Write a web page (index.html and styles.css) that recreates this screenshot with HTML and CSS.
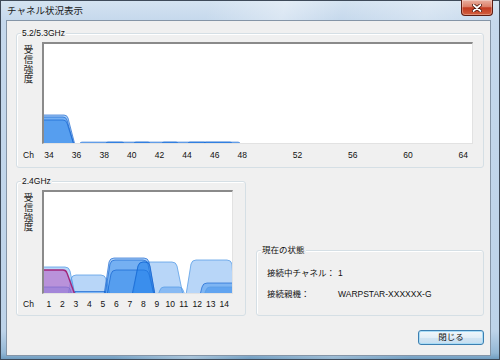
FILE: index.html
```html
<!DOCTYPE html>
<html lang="ja">
<head>
  <meta charset="UTF-8" />
  <meta name="viewport" content="width=device-width, initial-scale=1" />
  <title>チャネル状況表示</title>
  <link rel="stylesheet" href="styles.css">
</head>
<body>
  <div class="window">
    <div class="titlebar">
      <span class="title">チャネル状況表示</span>
      <button class="close-btn" aria-label="閉じる">
        <svg width="10" height="8" viewBox="0 0 10 8">
          <path d="M1.5,1 L8.5,7 M8.5,1 L1.5,7" stroke="#4a1309" stroke-width="3.4" stroke-linecap="round"/>
          <path d="M1.5,1 L8.5,7 M8.5,1 L1.5,7" stroke="#fff" stroke-width="1.7" stroke-linecap="round"/>
        </svg>
      </button>
    </div>

    <div class="client">
      <!-- 5GHz -->
      <div class="group">
        <div class="group-title">5.2/5.3GHz</div>
        <div class="chart-row">
          <div class="ylabel"><span>受信強度</span></div>
          <div class="plot plot-5g">
            <svg width="428" height="99" viewBox="0 0 428 99">
              <path class="s-blue" d="M-2,101 V71 H20 Q23,71 24,74 L31,101 Z"/>
              <path class="s-blue" d="M-2,101 V73 H19 Q22,73 23,76 L30,101 Z"/>
              <path class="s-blue" d="M-2,101 V76 H19 Q22,76 23,79 L30,101 Z"/>
              <rect class="s-band" x="36" y="98" width="44" height="4" rx="2"/>
              <rect class="s-band" x="62" y="98" width="44" height="4" rx="2"/>
              <rect class="s-band" x="90" y="98" width="44" height="4" rx="2"/>
              <rect class="s-band" x="118" y="98" width="44" height="4" rx="2"/>
              <rect class="s-band" x="144" y="98" width="44" height="4" rx="2"/>
              <rect class="s-band" x="160" y="98" width="36" height="4" rx="2"/>
            </svg>
          </div>
        </div>
        <div class="axis">
          <span class="ch">Ch</span>
          <div class="ticks ticks-5g">
            <span style="grid-column: 1">34</span>
            <span style="grid-column: 3">36</span>
            <span style="grid-column: 5">38</span>
            <span style="grid-column: 7">40</span>
            <span style="grid-column: 9">42</span>
            <span style="grid-column: 11">44</span>
            <span style="grid-column: 13">46</span>
            <span style="grid-column: 15">48</span>
            <span style="grid-column: 19">52</span>
            <span style="grid-column: 23">56</span>
            <span style="grid-column: 27">60</span>
            <span style="grid-column: 31">64</span>
          </div>
        </div>
      </div>

      <div class="lower">
        <!-- 2.4GHz -->
        <div class="group">
          <div class="group-title">2.4GHz</div>
          <div class="chart-row">
            <div class="ylabel"><span>受信強度</span></div>
            <div class="plot plot-24">
              <svg width="188" height="101" viewBox="0 0 188 101">
                <path class="s-light" d="M-2,103 V75 H21 Q25,75 26,79 L31,103 Z"/>
                <path class="s-light" d="M24,103 L27,87 Q28,83 32,83 H57 Q61,83 62,87 L66,103 Z"/>
                <path class="s-light" d="M89,103 L94,74 Q95,70 99,70 H128 Q132,70 133,74 L139,103 Z"/>
                <path class="s-light" d="M142,103 L147,72 Q148,68 152,68 H183 Q187,68 188,72 L190,103 Z"/>
                <path class="s-light" d="M114,103 L116,98 Q117,95 120,95 H135 Q138,95 139,98 L141,103 Z"/>
                <path class="s-blue" d="M156,103 L158,95 Q159,91 163,91 H190 V103 Z"/>
                <path class="s-light" d="M160,103 L162,98 Q163,95 166,95 H190 V103 Z"/>
                <rect class="s-blue" x="31" y="99.5" width="30" height="3"/>
                <path class="s-blue" d="M-2,103 V95 H22 Q25,95 26,97 L28,103 Z"/>
                <path class="s-purple" d="M-2,103 V78 H19 Q22,78 23,81 L31,103 Z"/>
                <path class="s-blue" d="M60,103 L65,70 Q66,66 70,66 H100 Q104,66 105,70 L111,103 Z"/>
                <path class="s-blue" d="M61,103 L66,72 Q67,68 71,68 H99 Q103,68 104,72 L110,103 Z"/>
                <path class="s-blue" d="M63,103 L67,82 Q68,78 72,78 H100 Q104,78 105,82 L110,103 Z"/>
                <path class="s-blue" d="M88,103 L94,74 Q95,70 99,70 H101 Q105,70 106,74 L111,103 Z"/>
              </svg>
            </div>
          </div>
          <div class="axis axis-24">
            <span class="ch">Ch</span>
            <div class="ticks ticks-24">
              <span>1</span><span>2</span><span>3</span><span>4</span><span>5</span>
              <span>6</span><span>7</span><span>8</span><span>9</span><span>10</span>
              <span>11</span><span>12</span><span>13</span><span>14</span>
            </div>
          </div>
        </div>

        <div class="side">
          <div class="group status-group">
            <div class="group-title">現在の状態</div>
            <dl class="status">
              <dt>接続中チャネル：</dt><dd>1</dd>
              <dt>接続親機：</dt><dd>WARPSTAR-XXXXXX-G</dd>
            </dl>
          </div>
        </div>
      </div>

      <div class="footer">
        <button class="btn">閉じる</button>
      </div>
    </div>
  </div>
</body>
</html>
```

FILE: styles.css
```css
body {
  margin: 0;
  font-family: "Liberation Sans", "Noto Sans CJK JP", sans-serif;
  font-size: 8.5px;
  color: #111;
  background: #fff;
}

.window {
  width: 500px;
  height: 360px;
  box-sizing: border-box;
  border: 1px solid #3e4a59;
  display: flex;
  flex-direction: column;
  background:
    linear-gradient(105deg, rgba(255,255,255,0) 35%, rgba(255,255,255,0.35) 48%, rgba(255,255,255,0) 58%, rgba(255,255,255,0.25) 72%, rgba(255,255,255,0) 85%),
    linear-gradient(to bottom, #d4e3f1 0, #c5d8ec 20px, #bdd3e9 330px, #93b7d5 352px, #6f9cc0 100%);
}

.titlebar {
  flex: none;
  height: 19px;
  display: flex;
  align-items: flex-start;
  padding-left: 6px;
}
.title {
  font-size: 9.5px;
  line-height: 19px;
  color: #1b1b1b;
}
.close-btn {
  margin: -1px 6px 0 auto;
  width: 32px;
  height: 16px;
  padding: 0;
  border: 1px solid #5e1d12;
  border-top: none;
  border-radius: 0 0 4px 4px;
  background: linear-gradient(to bottom, #eab0a0 0%, #dc7f68 45%, #c23a20 52%, #d2603f 100%);
  box-shadow: inset 0 0 0 1px rgba(255,255,255,0.3);
  display: flex;
  align-items: center;
  justify-content: center;
}
.close-btn svg {
  display: block;
}

.client {
  flex: 1;
  margin: 0 8px 3px 5px;
  border: 1px solid #8595a7;
  background: #f0f0f0;
  padding: 12px 6px 0 9px;
}

.group {
  border: 1px solid #d5dfe5;
  border-radius: 3px;
  box-shadow: inset 1px 1px 0 #fff;
}
.group-title {
  display: table;
  margin: -6px 0 0 4px;
  padding: 0 1px;
  line-height: 11px;
  background: #f0f0f0;
}

.chart-row {
  display: flex;
  margin-top: 3px;
}
.ylabel {
  width: 25px;
  padding-right: 2px;
  box-sizing: border-box;
  display: flex;
  justify-content: center;
  align-items: flex-start;
}
.ylabel span {
  width: 10px;
  font-size: 9.5px;
  line-height: 9.8px;
  text-align: center;
  margin-top: 3px;
  color: #222;
}

.plot {
  box-sizing: border-box;
  background: #fff;
  border-style: solid;
  border-width: 2px 1px 1px 2px;
  border-color: #8a8a8a #e2e2e2 #e2e2e2 #8a8a8a;
  overflow: hidden;
}
.plot svg {
  display: block;
}
.plot-5g {
  width: 431px;
  height: 102px;
}
.plot-24 {
  width: 191px;
  height: 104px;
}

.s-blue {
  fill: rgba(40, 132, 236, 0.4);
  stroke: rgba(15, 95, 205, 0.8);
  stroke-width: 0.8;
}
.s-light {
  fill: rgba(40, 130, 235, 0.33);
  stroke: #5b9ee6;
  stroke-width: 0.8;
}
.s-band {
  fill: rgba(35, 125, 232, 0.6);
  stroke: rgba(15, 95, 205, 0.8);
  stroke-width: 0.6;
}
.s-purple {
  fill: rgba(185, 105, 200, 0.62);
  stroke: #a1267a;
  stroke-width: 1.4;
}

.axis {
  display: flex;
  line-height: 11px;
  padding: 6px 0;
}
.axis-24 {
  padding: 5px 0;
}
.ch {
  width: 25px;
  padding-left: 6px;
  box-sizing: border-box;
}
.ticks {
  display: grid;
  text-align: center;
}
.ticks-5g {
  grid-template-columns: repeat(31, 13.82px);
}
.ticks-24 {
  grid-template-columns: repeat(14, 13.5px);
}

.lower {
  margin-top: 13px;
  display: grid;
  grid-template-columns: 230px 228px;
  column-gap: 10px;
}
.side {
  display: flex;
  flex-direction: column;
  justify-content: flex-end;
}
.status-group {
  height: 66px;
  box-sizing: border-box;
}
.status {
  margin: 11px 0 0 10px;
  display: grid;
  grid-template-columns: 71px auto;
  row-gap: 9px;
  line-height: 12px;
}
.status dt,
.status dd {
  margin: 0;
}

.footer {
  margin-top: 14px;
  display: flex;
  justify-content: flex-end;
}
.btn {
  width: 66px;
  height: 15px;
  padding: 0;
  font: inherit;
  line-height: 13px;
  color: #111;
  border: 1px solid #3c7fb1;
  border-radius: 3px;
  background: linear-gradient(to bottom, #f1f7fb 0%, #e2eef7 50%, #d2e5f3 51%, #c7def0 100%);
  box-shadow: inset 0 0 0 1px #a9dcf6;
}
```
